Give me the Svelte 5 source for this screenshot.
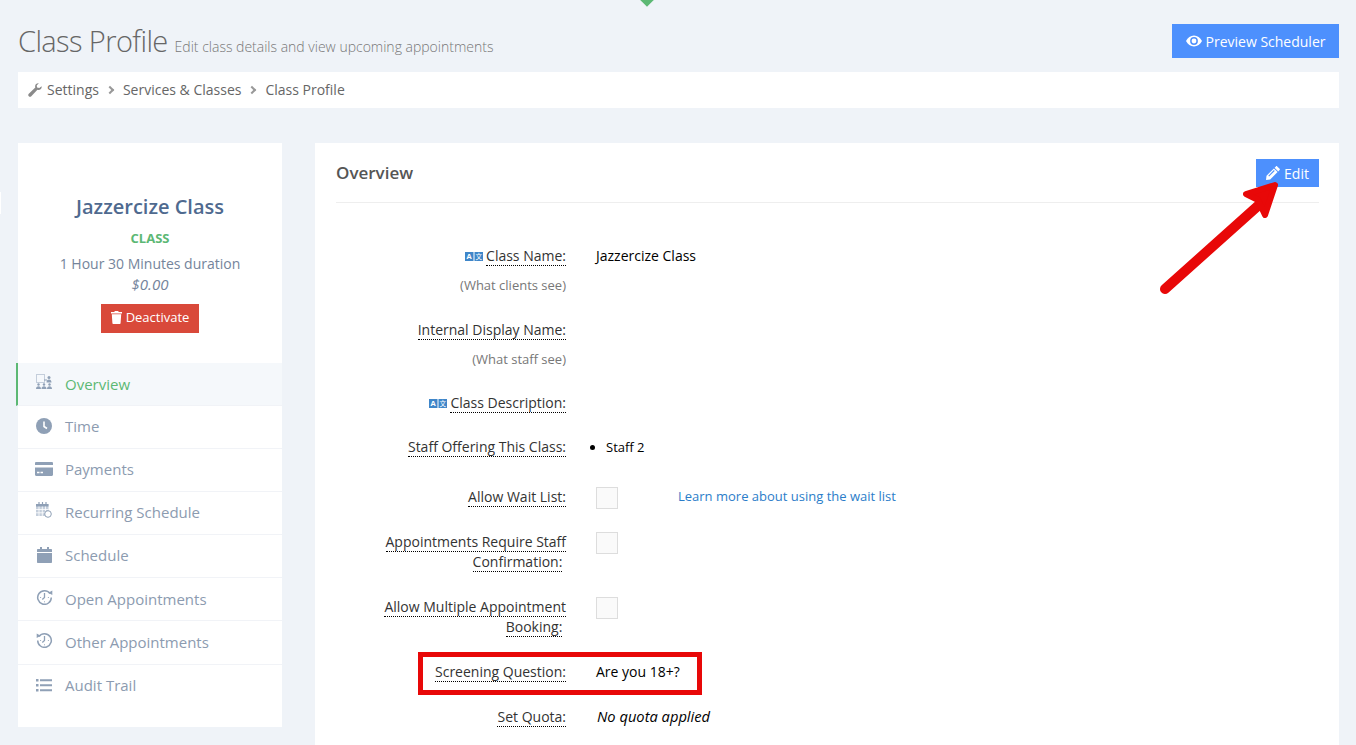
<script>
	const menu = [
		{ label: 'Overview', icon: 'staff', active: true, up: true },
		{ label: 'Time', icon: 'clock' },
		{ label: 'Payments', icon: 'card' },
		{ label: 'Recurring Schedule', icon: 'recurring', up: true },
		{ label: 'Schedule', icon: 'calendar' },
		{ label: 'Open Appointments', icon: 'open', up: true },
		{ label: 'Other Appointments', icon: 'other', up: true },
		{ label: 'Audit Trail', icon: 'list' }
	];
</script>

{#snippet translate()}
	<svg class="tr" width="18" height="9" viewBox="0 0 18 9">
		<rect x="0" y="0" width="8.5" height="9" fill="#3f86c9" />
		<rect x="9.5" y="0" width="8.5" height="9" fill="#3f86c9" />
		<text x="4.2" y="7.4" text-anchor="middle" class="tr-a">A</text>
		<text x="13.7" y="7.4" text-anchor="middle" class="tr-b">文</text>
	</svg>
{/snippet}

<div class="page">
	<div class="notch"></div>
	<div class="edge"></div>

	<header class="head">
		<h1>Class Profile <small>Edit class details and view upcoming appointments</small></h1>
		<button class="btn preview">
			<svg width="16" height="12" viewBox="0 0 16 12"><path fill="#fff" fill-rule="evenodd" d="M8 .5C4.600.5 1.700 2.600 0 6c1.700 3.400 4.600 5.500 8 5.500s6.300-2.100 8-5.500C14.300 2.600 11.400.5 8 .5zm0 1.600a3.900 3.900 0 1 1 0 7.800 3.900 3.900 0 0 1 0-7.800zM8 3.600a2.400 2.400 0 1 0 0 4.800 2.400 2.400 0 0 0 0-4.800z" /></svg>
			Preview Scheduler
		</button>
	</header>

	<nav class="crumbs">
		<svg width="14" height="14" viewBox="0 0 14 14"><path fill="#8a8a8a" d="M13.600 3.300c.2.600.1 1.800-.7 2.600-1 1-2.300 1.200-3.500.8L3.300 13.200c-.7.700-1.800.7-2.500 0s-.7-1.800 0-2.500l6.500-6.100C6.900 3.400 7.100 2 8.100 1.100 8.900.3 10.100 0 10.800.3L8.700 2.400l.4 2.100 2.200.5z" /></svg>
		<span>Settings</span><i class="sep"></i><span>Services &amp; Classes</span><i class="sep"></i><span>Class Profile</span>
	</nav>

	<div class="columns">
		<aside class="side">
			<div class="card">
				<h2>Jazzercize Class</h2>
				<div class="kind">CLASS</div>
				<div class="dur">1 Hour 30 Minutes duration</div>
				<div class="price">$0.00</div>
				<button class="btn danger">
					<svg width="11" height="13" viewBox="0 0 11 13"><path fill="#fff" d="M3.800 0h3.400l.5 1H11v1.500H0V1h3.300zM.8 3.300h9.400l-.6 8.700c0 .6-.5 1-1 1H2.400c-.5 0-1-.4-1-1z" /></svg>
					Deactivate
				</button>
			</div>
			<ul class="menu">
				{#each menu as item}
					<li class:active={item.active}>
						<span class="ico" class:up={item.up}>
							{#if item.icon === 'staff'}
								<svg width="17" height="16" viewBox="0 0 17 16" fill="#8fa0b6"><rect x=".5" y=".5" width="8" height="8" fill="none" stroke="#c4cedb" /><circle cx="13" cy="3.500" r="1.500" /><path d="M10.500 8.500c0-2 1-3 2.500-3s2.500 1 2.500 3zM8 5.500h3v1H8z" /><circle cx="2.500" cy="10.500" r="1.200" /><circle cx="8" cy="10.500" r="1.200" /><circle cx="13.500" cy="10.500" r="1.200" /><path d="M0 15c0-1.800 1-2.800 2.500-2.800S5 13.200 5 15zM5.500 15c0-1.800 1-2.800 2.500-2.800s2.500 1 2.500 2.800zM11 15c0-1.800 1-2.800 2.500-2.800S16 13.200 16 15z" /></svg>
							{:else if item.icon === 'clock'}
								<svg width="16" height="16" viewBox="0 0 16 16"><circle cx="8" cy="8" r="8" fill="#8fa0b6" /><path d="M8 3.500V8.500l3 2" fill="none" stroke="#fff" stroke-width="1.600" /></svg>
							{:else if item.icon === 'card'}
								<svg width="18" height="14" viewBox="0 0 18 14" fill="#8fa0b6"><path d="M0 1.200C0 .5.500 0 1.200 0h15.600c.7 0 1.200.5 1.200 1.200V3H0zM0 5.500h18v7.300c0 .7-.5 1.200-1.200 1.200H1.200C.5 14 0 13.500 0 12.800z" /><path d="M2 9.800h2.500v1.400H2zM5.500 9.800H8v1.400H5.500z" fill="#fff" /></svg>
							{:else if item.icon === 'recurring'}
								<svg width="16" height="16" viewBox="0 0 16 16"><path d="M0 2h12.500v12H0z" fill="#c4cedb" /><path d="M0 2h12.500v2.500H0z" fill="#8fa0b6" /><path d="M3 0v3M6.500 0v3M10 0v3" stroke="#8fa0b6" stroke-width="1.200" /><path d="M3 4.500V14M6.300 4.500V14M9.500 4.500V14M0 7.500h12.500M0 10.800h12.500" stroke="#fff" stroke-width=".8" /><circle cx="12" cy="12" r="3.300" fill="#fff" stroke="#8fa0b6" /></svg>
							{:else if item.icon === 'calendar'}
								<svg width="15" height="16" viewBox="0 0 15 16" fill="#8fa0b6"><path d="M3 0h2v2h5V0h2v2h2c.6 0 1 .4 1 1v2H0V3c0-.6.4-1 1-1h2zM0 6h15v9c0 .6-.4 1-1 1H1c-.6 0-1-.4-1-1z" /></svg>
							{:else if item.icon === 'open'}
								<svg width="17" height="16" viewBox="0 0 16 16" fill="none" stroke="#8fa0b6"><path d="M13.500 4.500A6.800 6.800 0 1 0 14.800 8.500" stroke-width="1.500" /><path d="M8 4v4.500L5.800 10.500" stroke-width="1.300" /><path d="M3.600 8.500h1M11.400 8.500h1M8 12.300v1" stroke-width=".9" /><path d="M11.800 3.800L15.800 1.500v4.500z" fill="#8fa0b6" stroke="none" /></svg>
							{:else if item.icon === 'other'}
								<svg width="17" height="16" viewBox="0 0 16 16" fill="none" stroke="#8fa0b6"><path d="M2.500 4.500A6.800 6.800 0 1 1 1.200 8.500" stroke-width="1.500" /><path d="M8 4v4.500L5.800 10.500" stroke-width="1.300" /><path d="M3.600 8.500h1M11.400 8.500h1M8 12.300v1" stroke-width=".9" /><path d="M4.200 3.800L.2 1.500v4.500z" fill="#8fa0b6" stroke="none" /></svg>
							{:else}
								<svg width="16" height="13" viewBox="0 0 16 13" fill="#8fa0b6"><path d="M0 0h2.500v2.500H0zM4 .3h12v2H4zM0 5h2.500v2.500H0zM4 5.300h12v2H4zM0 10h2.500v2.500H0zM4 10.300h12v2H4z" /></svg>
							{/if}
						</span>
						{item.label}
					</li>
				{/each}
			</ul>
		</aside>

		<main class="panel">
			<div class="panel-head">
				<h3>Overview</h3>
				<button class="btn edit">
					<svg width="14" height="14" viewBox="0 0 14 14"><path fill="#fff" d="M11.200.4l2.400 2.400c.4.400.4.900 0 1.300l-1.300 1.300-3.700-3.700L9.900.4c.4-.4.900-.4 1.300 0zM7.900 2.400l3.700 3.700-7.400 7.400L0 14l.5-4.200zM2.300 9.700l.8.800 5.600-5.600-.8-.8z" /></svg>
					Edit
				</button>
			</div>

			<div class="rows">
				<div class="row r-name">
					<div class="lbl">{@render translate()}<span class="u">Class Name:</span></div>
					<div>Jazzercize Class</div>
				</div>
				<div class="row r-hint"><div class="hint">(What clients see)</div></div>

				<div class="row r-internal">
					<div class="lbl"><span class="u">Internal Display Name:</span></div>
				</div>
				<div class="row r-hint"><div class="hint">(What staff see)</div></div>

				<div class="row r-desc">
					<div class="lbl">{@render translate()}<span class="u">Class Description:</span></div>
				</div>

				<div class="row r-staff">
					<div class="lbl"><span class="u">Staff Offering This Class:</span></div>
					<ul class="staff"><li>Staff 2</li></ul>
				</div>

				<div class="row r-wait">
					<div class="lbl"><span class="u">Allow Wait List:</span></div>
					<div class="check-line">
						<span class="box"></span>
						<span class="link">Learn more about using the wait list</span>
					</div>
				</div>

				<div class="row r-confirm">
					<div class="lbl"><span class="u">Appointments Require Staff Confirmation:</span>&nbsp;</div>
					<div class="check-line"><span class="box"></span></div>
				</div>

				<div class="row r-multi">
					<div class="lbl"><span class="u">Allow Multiple Appointment Booking:</span>&nbsp;</div>
					<div class="check-line"><span class="box"></span></div>
				</div>

				<div class="row r-screen">
					<div class="lbl"><span class="u">Screening Question:</span></div>
					<div>Are you 18+?</div>
				</div>

				<div class="row r-quota">
					<div class="lbl"><span class="u">Set Quota:</span></div>
					<div class="none">No quota applied</div>
				</div>
			</div>
		</main>
	</div>

	<!-- annotations drawn over the page -->
	<div class="redbox"></div>
	<svg class="arrow" width="130" height="120" viewBox="0 0 130 120">
		<path d="M5 109L100 24" fill="none" stroke="#e80808" stroke-width="10" stroke-linecap="round" />
		<path d="M115 5L86 14L98 20L105 35z" fill="#e80808" stroke="#e80808" stroke-width="6" stroke-linejoin="round" />
	</svg>
</div>

<style>
	:global(body) {
		margin: 0;
		background: #eff3f8;
	}
	.page {
		position: relative;
		height: 745px;
		overflow: hidden;
		padding: 0 17px 0 18px;
		box-sizing: border-box;
		background: #eff3f8;
		font-family: 'Open Sans', sans-serif;
		font-size: 14px;
		line-height: 20px;
		color: #333;
	}
	.notch {
		position: absolute;
		left: 641px;
		top: -6px;
		width: 12px;
		height: 12px;
		transform: rotate(45deg) scale(0.8);
		background: #5cb874;
	}
	.edge {
		position: absolute;
		left: 0;
		top: 192px;
		width: 1px;
		height: 22px;
		background: #fff;
	}
	.head {
		display: flex;
		justify-content: space-between;
		align-items: flex-start;
		height: 72px;
	}
	h1 {
		margin: 21px 0 0;
		font-size: 29px;
		font-weight: 300;
		line-height: 40px;
		color: #666;
		letter-spacing: -0.6px;
	}
	h1 small {
		font-size: 14px;
		font-weight: 300;
		color: #777;
		letter-spacing: 0;
	}
	.btn {
		display: inline-flex;
		align-items: center;
		justify-content: center;
		gap: 4px;
		border: 0;
		padding: 0;
		color: #fff;
		font-family: inherit;
		font-weight: 500;
		font-size: 14px;
	}
	.preview {
		margin-top: 24px;
		width: 167px;
		height: 34px;
		background: #4d90fd;
	}
	.crumbs {
		display: flex;
		align-items: center;
		height: 36px;
		padding-left: 10px;
		background: #fff;
		color: #666;
		font-size: 14px;
	}
	.crumbs svg {
		margin-right: 5px;
	}
	.sep {
		width: 6px;
		height: 6px;
		margin: 0 10px 0 8px;
		border-top: 2px solid #999;
		border-right: 2px solid #999;
		box-sizing: border-box;
		transform: rotate(45deg);
	}
	.columns {
		display: flex;
		gap: 33px;
		margin-top: 35px;
		align-items: flex-start;
	}
	.side {
		width: 264px;
		flex: none;
		height: 584px;
		background: #fff;
	}
	.card {
		display: flex;
		flex-direction: column;
		align-items: center;
		padding-top: 50px;
		height: 220px;
		box-sizing: border-box;
	}
	h2 {
		margin: 0;
		font-size: 20px;
		line-height: 28px;
		font-weight: 600;
		color: #4f6a8f;
	}
	.kind {
		margin-top: 7px;
		font-size: 13px;
		line-height: 20px;
		font-weight: 700;
		color: #5cb874;
	}
	.dur {
		margin-top: 6px;
		color: #74849b;
	}
	.price {
		font-size: 15px;
		font-style: italic;
		color: #74849b;
	}
	.danger {
		margin-top: 10px;
		width: 98px;
		height: 29px;
		padding-bottom: 3px;
		background: #d9493a;
		font-size: 13px;
	}
	.menu {
		list-style: none;
		margin: 0;
		padding: 0;
	}
	.menu li {
		display: flex;
		align-items: center;
		height: 43px;
		box-sizing: border-box;
		padding: 0 0 2px 17px;
		border-bottom: 1px solid #f1f3f7;
		font-size: 15px;
		color: #8c9bb0;
	}
	.menu li:nth-child(6) {
		padding-bottom: 0;
	}
	.menu li:nth-child(7) {
		height: 44px;
		padding-bottom: 1px;
	}
	.menu li:last-child {
		padding-bottom: 3px;
		border-bottom: 0;
	}
	.menu li.active {
		margin-left: -2px;
		padding-bottom: 0;
		border-left: 2px solid #5cb874;
		background: #f5f8fb;
		color: #5cb874;
	}
	.ico {
		display: flex;
		justify-content: center;
		width: 18px;
		margin-right: 12px;
	}
	.ico.up {
		margin-top: -5px;
	}
	.panel {
		flex: 1;
		height: 700px;
		padding: 16px 20px 0 21px;
		box-sizing: border-box;
		background: #fff;
	}
	.panel-head {
		display: flex;
		justify-content: space-between;
		align-items: center;
		height: 28px;
		padding-bottom: 15px;
		border-bottom: 1px solid #eee;
	}
	h3 {
		margin: 0;
		font-size: 17px;
		font-weight: 600;
		color: #555;
	}
	.edit {
		width: 63px;
		height: 28px;
		background: #4d90fd;
	}
	.rows {
		padding-top: 43px;
	}
	.row {
		display: grid;
		grid-template-columns: 230px 1fr;
		column-gap: 30px;
		color: #000;
	}
	.lbl {
		text-align: right;
		color: #333;
	}
	.u {
		border-bottom: 1px dotted #000;
	}
	.tr {
		margin-right: 3px;
		vertical-align: 0;
	}
	.tr-a {
		font-size: 7.500px;
		font-weight: 700;
		fill: #fff;
	}
	.tr-b {
		font-family: 'Noto Sans CJK SC', sans-serif;
		font-size: 6.500px;
		fill: #fff;
	}
	.hint {
		text-align: right;
		font-size: 13px;
		color: #777;
	}
	.r-hint {
		margin-top: 9px;
	}
	.r-internal {
		margin-top: 25px;
	}
	.r-desc {
		margin-top: 24px;
	}
	.r-staff {
		margin-top: 24px;
	}
	.staff {
		margin: 0;
		padding-left: 10px;
		font-size: 13px;
		list-style-position: outside;
	}
	.r-wait {
		margin-top: 30px;
	}
	.check-line {
		display: flex;
		align-items: flex-start;
	}
	.box {
		width: 22px;
		height: 22px;
		box-sizing: border-box;
		border: 1px solid #ddd;
		background: #fafafa;
	}
	.link {
		margin: -1px 0 0 60px;
		font-size: 13px;
		color: #2b7dc9;
	}
	.r-confirm {
		margin-top: 23px;
	}
	.r-multi {
		margin-top: 25px;
	}
	.r-screen {
		margin-top: 25px;
	}
	.r-quota {
		margin-top: 25px;
	}
	.none {
		margin: -1px 0 0 1px;
		font-size: 14.700px;
		font-style: italic;
	}
	.redbox {
		position: absolute;
		left: 418px;
		top: 652px;
		width: 284px;
		height: 43px;
		box-sizing: border-box;
		border: 5px solid #e80808;
	}
	.arrow {
		position: absolute;
		left: 1160px;
		top: 180px;
	}
</style>
